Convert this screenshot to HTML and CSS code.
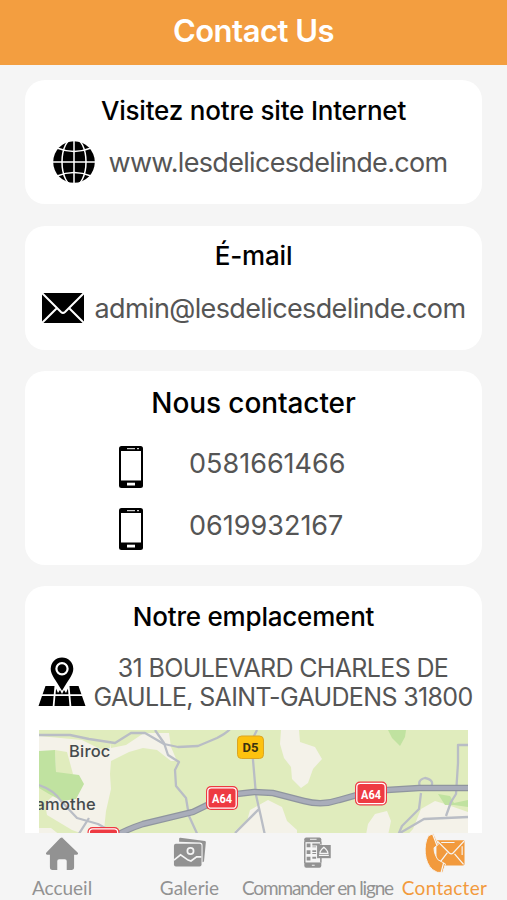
FILE: index.html
```
<!DOCTYPE html>
<html lang="fr">
<head>
<meta charset="UTF-8">
<meta name="viewport" content="width=device-width, initial-scale=1.0">
<title>Contact Us</title>
<link rel="stylesheet" href="styles.css">
</head>
<body>

<header class="header">
  <h1>Contact Us</h1>
</header>

<main class="content">
  <section class="card">
    <h2 class="title-site">Visitez notre site Internet</h2>
    <div class="row row-site">
      <svg class="icon-globe" viewBox="0 0 42 42">
        <circle cx="21" cy="21" r="20.8"/>
        <g fill="none" stroke="#fff" stroke-width="1.5">
          <path d="M21 0v42M0 21h42"/>
          <ellipse cx="21" cy="21" rx="12" ry="24"/>
          <path d="M4 7Q21 14 38 7M4 35Q21 28 38 35"/>
        </g>
      </svg>
      <a class="value-site">www.lesdelicesdelinde.com</a>
    </div>
  </section>

  <section class="card">
    <h2 class="title-mail">É-mail</h2>
    <div class="row row-mail">
      <svg class="icon-mail" viewBox="0 0 42 30">
        <path d="M0 0h42v30H0z"/>
        <path d="M0 0l19 19q2 1.8 4 0L42 0M0 30l14.500-14.500M42 30L27.500 15.500" fill="none" stroke="#fff" stroke-width="2"/>
      </svg>
      <a class="value-mail">admin@lesdelicesdelinde.com</a>
    </div>
  </section>

  <section class="card card-phone">
    <h2 class="title-phone">Nous contacter</h2>
    <div class="row">
      <svg class="icon-phone" viewBox="0 0 24 42">
        <rect width="24" height="42" rx="2.5"/>
        <path d="M2 5h20v29.5H2z" fill="#fff"/>
        <path d="M8 2.7h8M18 2.7h2" stroke="#fff" stroke-width="1"/>
        <path d="M8 36.7h8v2.8H8z" fill="#fff"/>
      </svg>
      <a class="value-phone">0581661466</a>
    </div>
    <div class="row">
      <svg class="icon-phone" viewBox="0 0 24 42">
        <rect width="24" height="42" rx="2.5"/>
        <path d="M2 5h20v29.5H2z" fill="#fff"/>
        <path d="M8 2.7h8M18 2.7h2" stroke="#fff" stroke-width="1"/>
        <path d="M8 36.7h8v2.8H8z" fill="#fff"/>
      </svg>
      <a class="value-phone">0619932167</a>
    </div>
  </section>

  <section class="card card-place">
    <h2 class="title-place">Notre emplacement</h2>
    <div class="row row-place">
      <svg class="icon-place" viewBox="0 0 48 50">
        <path d="M7.500 29h33L47.500 49H.500z"/>
        <path d="M0 38.200h48M17.500 28l-2 22M30.500 28l2 22" stroke="#fff" stroke-width="1.800"/>
        <path d="M16 27l4 9 2-3 2 4 2-4 2 3 4-9z" fill="#fff"/>
        <path d="M24 .500a11.300 11.300 0 0 1 11.300 11.300c0 6-5 11-11.300 22C17.700 22.800 12.700 17.800 12.700 11.800A11.300 11.300 0 0 1 24 .500z"/>
        <circle cx="24" cy="11.800" r="5.600" fill="none" stroke="#fff" stroke-width="2.200"/>
      </svg>
      <address>31 BOULEVARD CHARLES DE<br>GAULLE, SAINT-GAUDENS 31800</address>
    </div>
    <svg class="map" viewBox="0 0 429 110">
      <rect width="429" height="110" fill="#e0ecbd"/>
      <!-- built-up areas -->
      <g fill="#f4f2e9">
        <path d="M0 4l30 2 40 0 2 12 15-3 18-12 25 0 2 14 6 14-6 0-14-11-14-2-14 4-18 9-1 13 1 15-5 22-2 19-7 9-25-9-25-15-2-12 14-12-3-19-12-10-16 0L0 20z"/>
        <path d="M242 0h18l1 12 15 5 7 12-9 10-5 14-7 5-9-9-1-12-7-9-4-14z"/>
        <path d="M0 98l12 0 15 12H0zM211 80l18-10 14 7 5 14 10 9 0 10h-55zM329 94l7-10 12-3 4 10-4 19h-22zM374 99l8-20 14-8 10 3 23 8v28h-65z"/>
        <path d="M196 101l22-19v28h-18z"/>
      </g>
      <path d="M0 0h72l-1 18-10 1-18-9L0 6z" fill="#e0ecbd"/>
      <path d="M16 20l12 2 6 22-10 2-7-4z" fill="#e0ecbd"/>
      <!-- woodland -->
      <g fill="#c0e2a0">
        <path d="M0 21l16-1 1 22 23 3 5 9-8 15-14 2-13-7-10-6z"/>
        <path d="M349 0h18l-1 7-5 9-8-8zM399 64l12 2 4 7 14-3v7l-14-2-9 0z"/>
      </g>
      <!-- local roads -->
      <g fill="none" stroke="#b9bdc5" stroke-width="2.300" stroke-linejoin="round">
        <path d="M0 5l31 0 19 4 26 4 16-10 14 0 19 11 14 3 20-1 19-8q10-5 14-10"/>
        <path d="M116 0l9 13 4 12 11 7-4 8 1 16 10 12 3 18 11 24"/>
        <path d="M0 55q15 5 22 16l16 17 21 6 18 10M50 88l-14 22"/>
        <path d="M218 0l-5 10 1 20 3 35 5 22 5 23M220 79l-24 24"/>
        <path d="M429 15h-10v18l-2 31-5 8-5 14M382 63l-2 16-17 17-6 14M361 103l24-14 44-2M382 59q-5-9 4-11 11 2 5 11"/>
      </g>
      <path d="M70 110q13-9 34-16l50-12 35-17 26-3 19 1 31 8q18 5 35-1l32-9 48-3h49" fill="none" stroke="#8f959f" stroke-width="6.500"/>
      <path d="M70 110q13-9 34-16l50-12 35-17 26-3 19 1 31 8q18 5 35-1l32-9 48-3h49" fill="none" stroke="#a9adba" stroke-width="4"/>
      <!-- road numbers -->
      <g class="shield">
        <rect x="198.500" y="6" width="26" height="22.500" rx="4" fill="#fdc20f" stroke="#dba524"/>
        <text x="211.500" y="22.200" fill="#3b3210">D5</text>
        <g id="a64">
          <rect x="167" y="56" width="32" height="24" rx="5" fill="#ee3a42"/>
          <rect x="168.800" y="57.800" width="28.400" height="20.400" rx="3.500" fill="#ee3a42" stroke="#fff" stroke-width="1.300"/>
          <text x="183" y="73" fill="#fff" textLength="20" lengthAdjust="spacingAndGlyphs">A64</text>
        </g>
        <use href="#a64" x="149" y="-4.500"/>
        <use href="#a64" x="-118.500" y="41"/>
      </g>
      <g class="town">
        <text x="30" y="26.500">Biroc</text>
        <text x="-3.500" y="80">amothe</text>
      </g>
    </svg>
  </section>
</main>

<nav class="tabs">
  <a class="tab tab-home">
    <svg viewBox="0 0 36 36">
      <path d="M18 1.500l16.500 16c1 1.200.400 2.300-1 2.300h-2.700v13.400q0 2.800-2.800 2.800h-5V26.500q0-2-2-2h-6q-2 0-2 2V36H8q-2.800 0-2.800-2.800V19.800H2.500c-1.400 0-2-1.100-1-2.300L16 2.300q2-1.600 4 0z"/>
    </svg>
    <span>Accueil</span>
  </a>
  <a class="tab tab-gallery">
    <svg viewBox="0 0 36 36">
      <path d="M6.500 6V3q0-1.200 1.300-1.100l26 3.300q1.200.200 1 1.400l-2 20.400-1.500.800V10q0-3-3-3z"/>
      <rect x="1" y="8.300" width="29.200" height="24" rx="2"/>
      <g fill="none" stroke="#f5f5f5" stroke-width="1.800">
        <circle cx="18.500" cy="15.800" r="3.300"/>
        <path d="M1 25.500l7-5.500 8 5.500 3 1 6-4.500h5"/>
      </g>
    </svg>
    <span>Galerie</span>
  </a>
  <a class="tab tab-order">
    <svg viewBox="0 0 36 36">
      <rect x="3.500" y="1.500" width="18" height="32" rx="2"/>
      <path d="M3.500 6.500h18v21.500h-18z" fill="#f5f5f5"/>
      <path d="M4 6v22.500M21 6v3M21 23v5" fill="none" stroke="#929292" stroke-width="1.500"/>
      <path d="M6 8h4v4H6zM6 15h4v4H6zM6 22h4v4H6zM12 8h8v2h-8zM12 11h4v1h-4zM12 15h4v2h-4zM12 18h4v1h-4zM12 22h4v2h-4z"/>
      <path d="M9.500 3.500h7M11.500 31h3" stroke="#f5f5f5"/>
      <path d="M17 9.500h14.500v14H17z"/>
      <path d="M19 20.500h10.500M20 18.500q0-3 4.200-6.500 4.300 3.500 4.300 6.500z" fill="none" stroke="#f5f5f5" stroke-width="1.300"/>
    </svg>
    <span>Commander en ligne</span>
  </a>
  <a class="tab tab-contact">
    <svg viewBox="0 0 42 42">
      <rect x="12" y="7.500" width="29.500" height="26.500" rx="1.500"/>
      <path d="M13 8.500l12.500 12.500q2 1.800 4 0L41 8.500M40.500 33L31 22M14 33l9.500-12.500" fill="none" stroke="#f5f5f5" stroke-width="1.300"/>
      <path d="M17 10h14M39 14v9" stroke="#f5f5f5" stroke-width="1.200"/>
      <path d="M3.500 3L9 .500l5 11.500-4.500 3.500c0 5 1.500 8.500 4 12.500l8 4.500-3 9q-6 1-10.500-3C-1 31-2 13 3.500 3z" stroke="#f5f5f5"/>
      <path d="M8 1l4.500 12M17 41l2.500-9.500" stroke="#f5f5f5" stroke-width="1.300"/>
    </svg>
    <span>Contacter</span>
  </a>
</nav>

</body>
</html>
```
FILE: styles.css
```
body {
  display: flex;
  flex-direction: column;
  height: 900px;
  margin: 0;
  overflow: hidden;
  background: #f5f5f5;
  color: #000;
  font-family: Inter, "Liberation Sans", sans-serif;
}

.header {
  flex: none;
  height: 65px;
  background: #f39e40;
  color: #fff;
  text-align: center;
}

h1 {
  margin: 0;
  font-size: 31px;
  font-weight: 600;
  line-height: 61px;
  letter-spacing: -0.5px;
}

.content {
  display: flex;
  flex: 1;
  flex-direction: column;
  gap: 21.3px;
  min-height: 0;
  padding: 15.4px 25px 0;
  overflow: hidden;
}

.card {
  box-sizing: border-box;
  flex: none;
  height: 124px;
  border-radius: 20px;
  background: #fff;
}

.card-phone {
  height: 194px;
}

.card-place {
  height: 300px;
}

h2 {
  margin: 0;
  padding-top: 14.5px;
  font-size: 26px;
  font-weight: 500;
  line-height: 32px;
  letter-spacing: -0.2px;
  text-align: center;
  white-space: nowrap;
}

.row {
  display: flex;
  align-items: center;
  justify-content: center;
  height: 42px;
  margin-top: 14.5px;
  color: #555;
  fill: #000;
  font-size: 27px;
  white-space: nowrap;
}

.row-site {
  padding-right: 7px;
  letter-spacing: -0.68px;
}

.row-mail {
  letter-spacing: -0.63px;
}

.value-site,
.value-mail {
  padding-top: 1px;
}

.icon-globe {
  width: 42px;
  height: 42px;
  margin-right: 14px;
}

.icon-mail {
  width: 42px;
  height: 30px;
  margin-right: 11px;
}

.title-phone {
  padding-top: 16px;
  font-size: 28px;
  letter-spacing: -0.1px;
}

.card-phone .row {
  justify-content: flex-start;
  margin-top: 27px;
  padding-left: 94px;
}

.card-phone .row + .row {
  margin-top: 20px;
}

.icon-phone {
  width: 24px;
  height: 42px;
  margin-right: 46px;
}

.value-phone {
  padding-bottom: 7px;
}

.title-place {
  padding-top: 15px;
}

.row-place {
  height: 58px;
  margin-top: 20px;
  padding-left: 4px;
}

.icon-place {
  flex: none;
  width: 48px;
  height: 50px;
  margin-right: 7px;
}

address {
  padding-top: 1px;
  font-size: 25px;
  font-style: normal;
  line-height: 29px;
  letter-spacing: -0.65px;
  text-align: center;
}

.map {
  display: block;
  width: 429px;
  height: 110px;
  margin: 18.6px auto 0 14px;
}

.shield {
  font-family: Roboto, sans-serif;
  font-size: 13px;
  font-weight: 700;
  text-anchor: middle;
}

.town {
  fill: #454a4d;
  font-size: 16.5px;
  font-weight: 500;
  letter-spacing: 0.2px;
}

.tabs {
  display: flex;
  flex: none;
  height: 67px;
  background: #f5f5f5;
  color: #929292;
  font-family: Lato, sans-serif;
  font-size: 19px;
}

.tab {
  display: flex;
  flex: none;
  flex-direction: column;
  align-items: center;
  width: 124px;
  white-space: nowrap;
}

.tab svg {
  width: 36px;
  height: 36px;
  margin-top: 3px;
  fill: currentColor;
}

.tab span {
  margin-top: 6px;
  line-height: 24px;
}

.tab-gallery {
  width: 131px;
}

.tab-order {
  width: 125px;
}

.tab-order span {
  letter-spacing: -1.15px;
}

.tab-contact {
  width: 129px;
  color: #f29a3d;
}

.tab-contact svg {
  width: 42px;
  height: 42px;
  margin-top: 0;
}

.tab-contact span {
  margin-top: 3px;
  letter-spacing: 0.3px;
}
```
